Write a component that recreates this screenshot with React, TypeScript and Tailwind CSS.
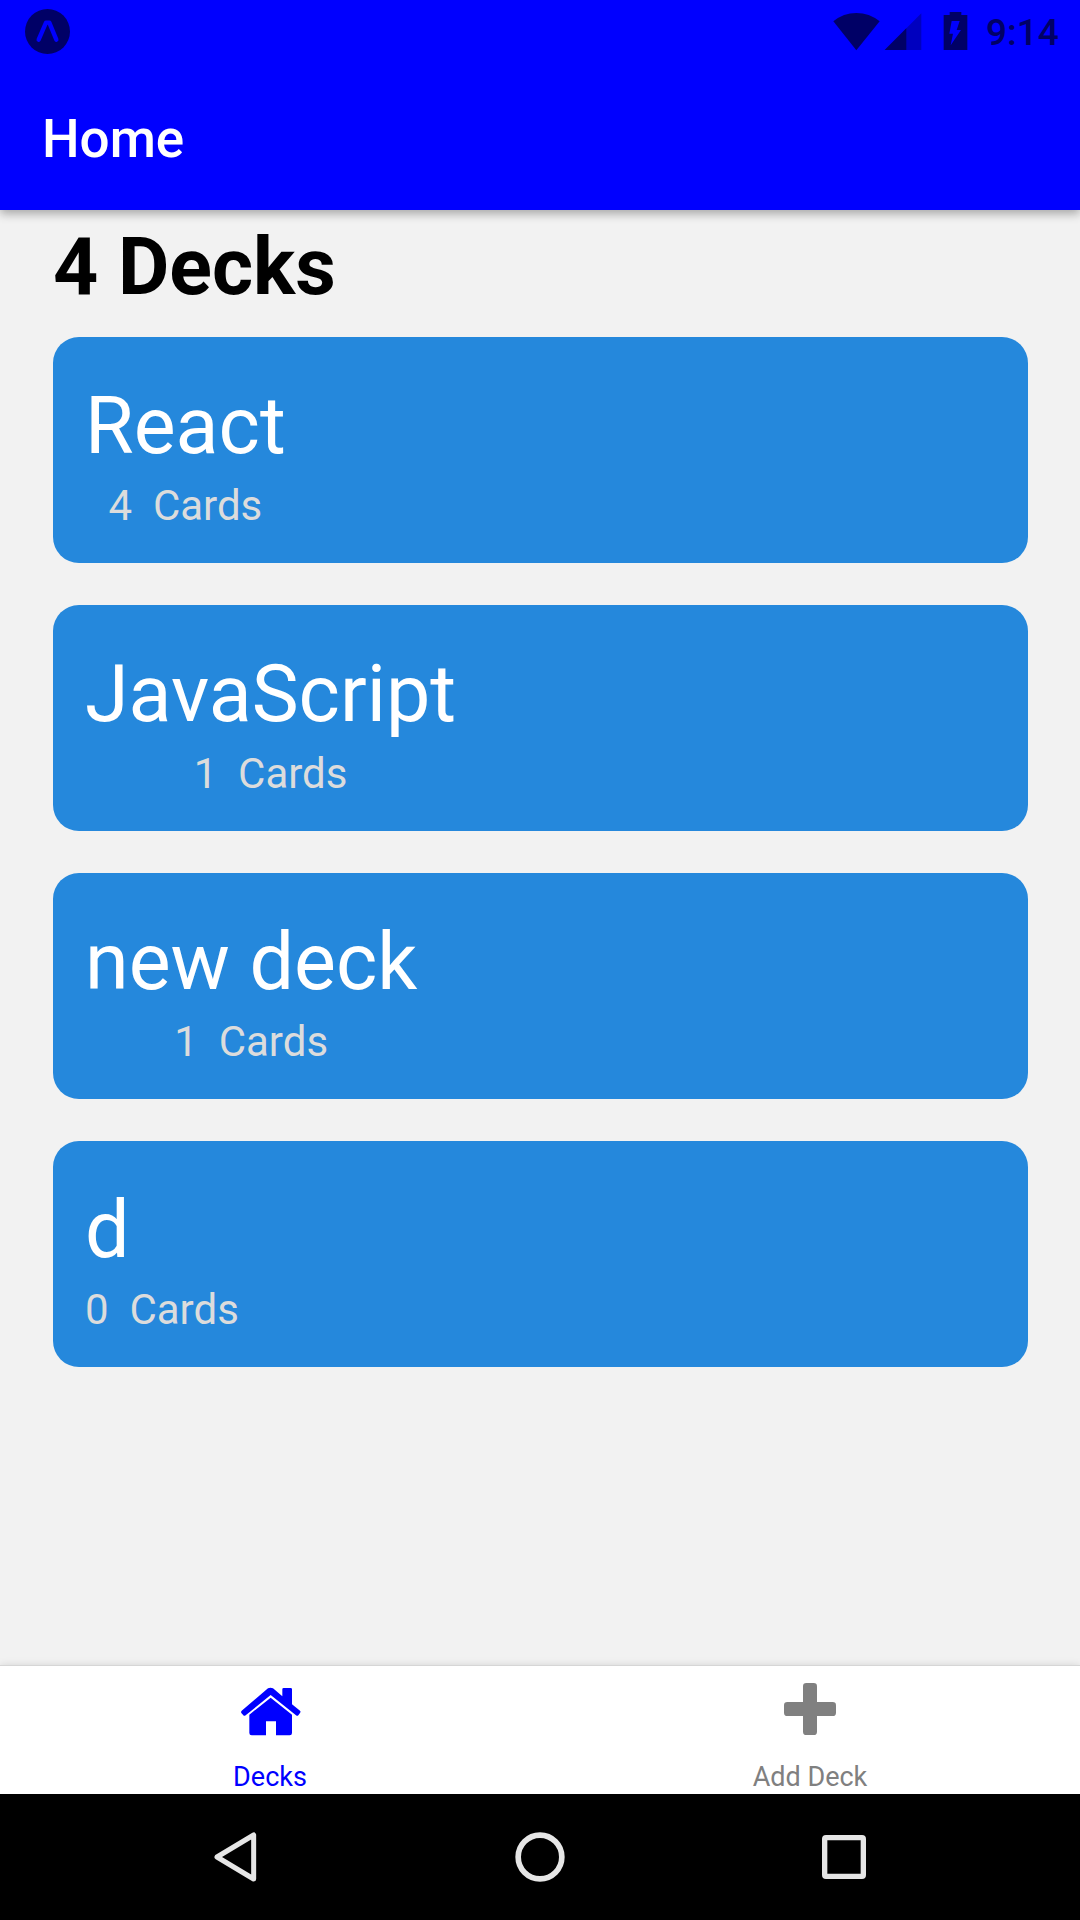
const decks = [
  { title: 'React', count: 4 },
  { title: 'JavaScript', count: 1 },
  { title: 'new deck', count: 1 },
  { title: 'd', count: 0 },
];

function StatusBar() {
  return (
    <div className="flex h-[63px] items-start justify-between text-[#000066]">
      <svg className="mt-[9px] ml-[25px] h-[45px] w-[45px]" viewBox="0 0 135 135">
        <circle cx="67.5" cy="67.5" r="67.5" fill="currentColor" />
        <path d="M41 92L63 41H73L94 92" fill="none" stroke="#0000ff" strokeWidth="13" strokeLinecap="round" strokeLinejoin="round" />
      </svg>
      <div className="flex h-full items-start">
        <svg className="mt-[12px] mr-[14px] h-[40px] w-[140px]" viewBox="95 36 420 120" fill="currentColor">
          <path d="M168 151L99 64Q129 39 168 39T238 64Z" />
          <path d="M253 150L363 40V150Z" fill="#0000bf" />
          <path d="M253 150L318 85V150Z" />
          <path fillRule="evenodd" d="M430 45H448V36H483V45H501V150H430ZM454 63H478L469 90H482L451 136L458 101H447Z" />
        </svg>
        <span className="mt-[12px] mr-[21px] w-[73px] text-[37px] leading-[42px] font-medium">9:14</span>
      </div>
    </div>
  );
}

function DeckCard({ title, count }: { title: string; count: number }) {
  return (
    <article className="flex h-[226px] items-start rounded-[26px] bg-[#2588dc] pt-[36px] pl-[32px]">
      <div className="flex flex-col">
        <h2 className="text-[79px] leading-[107px] whitespace-nowrap text-white">{title}</h2>
        <p className="mt-px text-center text-[42px] leading-[50px] whitespace-pre text-[#dcdcdc]">{`${count}  Cards`}</p>
      </div>
    </article>
  );
}

function HomeIcon() {
  return (
    <svg className="ml-[2px] h-[50px] w-[62px]" viewBox="120 137 186 150" fill="currentColor">
      <path d="M204 144Q211 140 219 144L247 168V147Q247 143 251 143H272Q276 143 276 147V192L300 211Q303 214 300 218L295 225Q292 228 288 225L212 164L137 225Q133 228 130 225L124 218Q122 214 125 211Z" />
      <path d="M212 172L276 223V278Q276 285 269 285H228V243H198V285H155Q148 285 148 278V223Z" />
    </svg>
  );
}

function PlusIcon() {
  return (
    <svg className="h-[52px] w-[52px]" viewBox="0 0 156 156" fill="currentColor">
      <rect x="57" width="42" height="156" rx="10" />
      <rect y="57" width="156" height="42" rx="10" />
    </svg>
  );
}

export default function App() {
  return (
    <div className="flex h-[1920px] w-[1080px] flex-col overflow-hidden bg-[#f2f2f2] font-['Roboto',sans-serif]">
      <header className="relative h-[210px] shrink-0 bg-[#0000ff] shadow-[0_4px_9px_rgba(0,0,0,0.3)]">
        <StatusBar />
        <h1 className="mt-[45px] ml-[42px] text-[53px] leading-[62px] font-medium text-white">Home</h1>
      </header>

      <main className="flex-1 pt-[10px] pr-[52px] pl-[53px]">
        <h2 className="h-[117px] text-[79px] leading-[94px] font-bold text-black">4 Decks</h2>
        <div className="flex flex-col gap-[42px]">
          {decks.map((deck) => (
            <DeckCard key={deck.title} {...deck} />
          ))}
        </div>
      </main>

      <nav className="relative grid h-[129px] shrink-0 grid-cols-2 border-t border-[#d6d6d6] bg-white text-[27px] leading-[32px] shadow-[0_0_8px_rgba(0,0,0,0.12)]">
        <div className="flex flex-col items-center text-[#0000ff]">
          <div className="mt-[20px] h-[75px]"><HomeIcon /></div>
          <span>Decks</span>
        </div>
        <div className="flex flex-col items-center text-[#808080]">
          <div className="mt-[17px] h-[78px]"><PlusIcon /></div>
          <span>Add Deck</span>
        </div>
      </nav>

      <footer className="relative flex h-[126px] shrink-0 items-center bg-black pl-[214px]">
        <svg className="h-[52px] w-[44px]" viewBox="104 93 132 156" fill="none" stroke="#e6e6e6" strokeWidth="15" strokeLinejoin="round">
          <path d="M113 171L223 105V237Z" />
        </svg>
        <svg className="ml-[256px] h-[52px] w-[52px]" viewBox="1002 93 156 156" fill="none" stroke="#e6e6e6" strokeWidth="17">
          <circle cx="1080" cy="171" r="65.5" />
        </svg>
        <svg className="ml-[254px] h-[48px] w-[48px]" viewBox="120 99 144 144" fill="none" stroke="#e6e6e6" strokeWidth="16">
          <rect x="134" y="113" width="116" height="116" rx="4" />
        </svg>
      </footer>
    </div>
  );
}
